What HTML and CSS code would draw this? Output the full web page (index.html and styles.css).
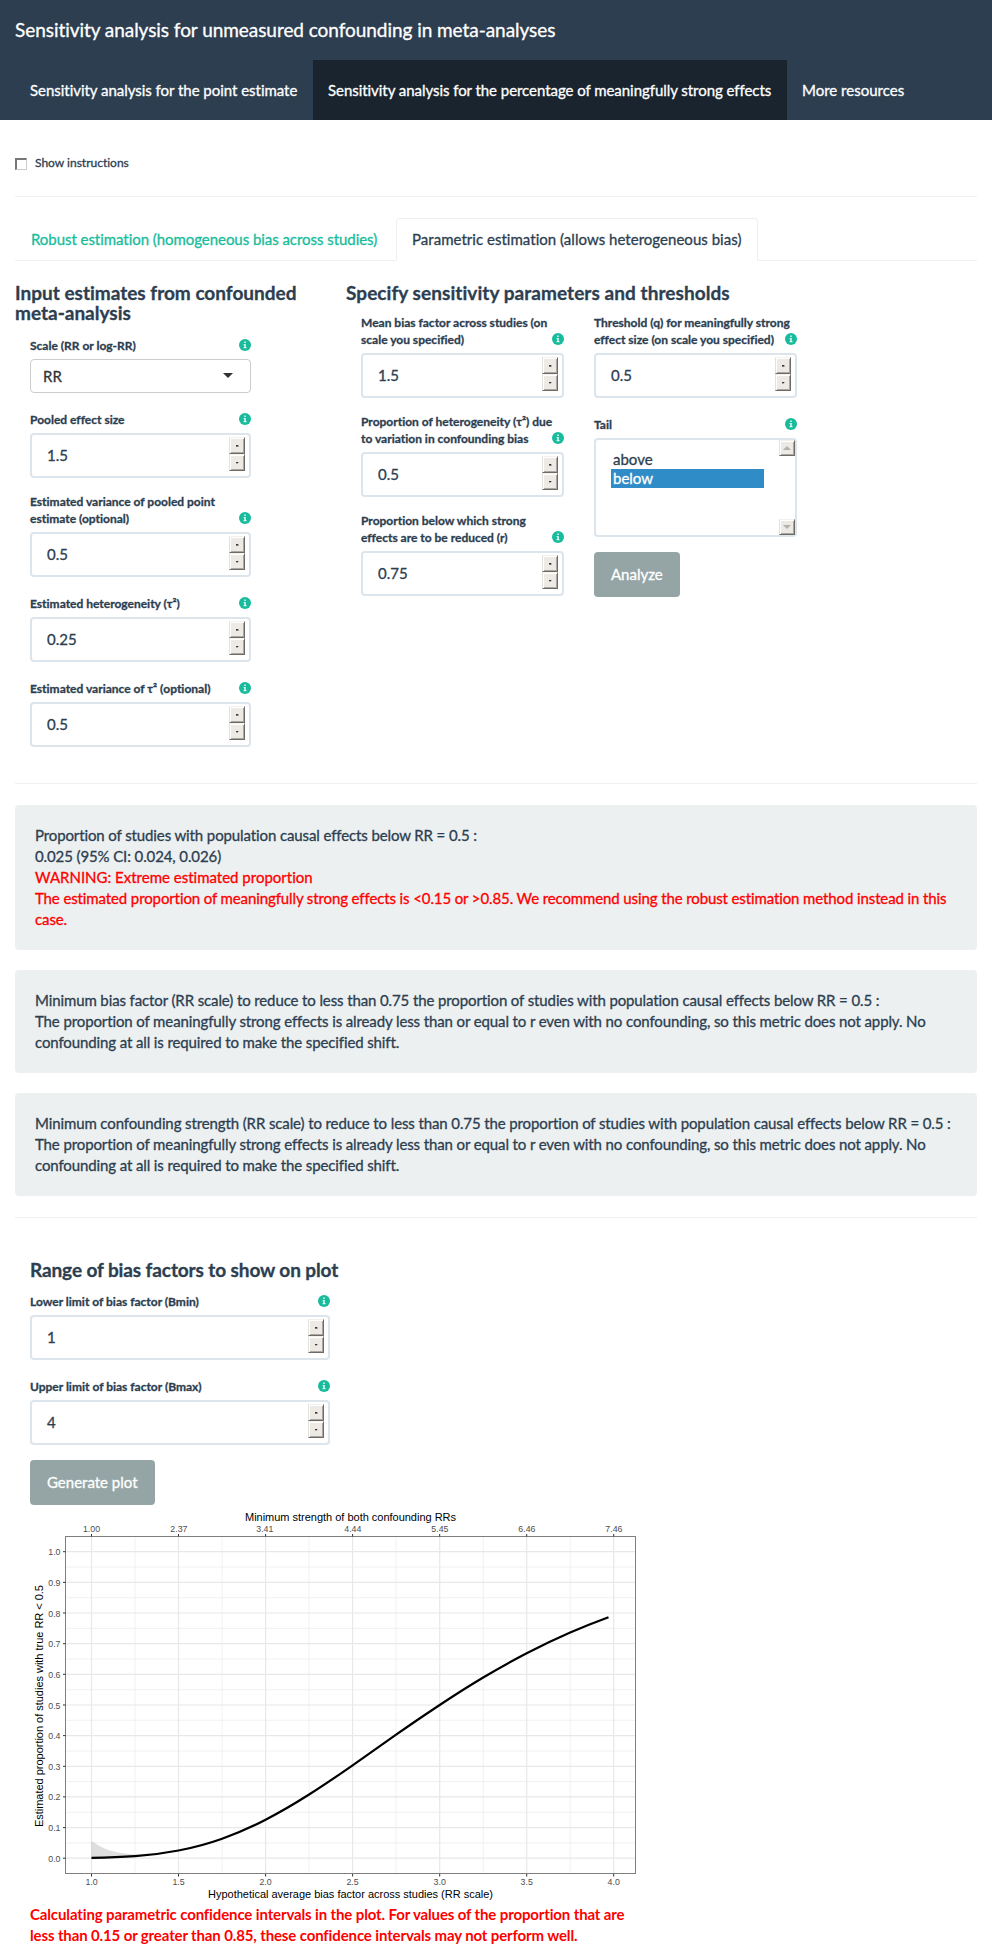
FILE: index.html
```html
<!DOCTYPE html>
<html lang="en">
<head>
<meta charset="utf-8">
<title>Sensitivity analysis for unmeasured confounding in meta-analyses</title>
<link rel="stylesheet" href="styles.css">
</head>
<body>
<svg class="defs" width="0" height="0"><symbol id="info" viewBox="0 0 12 12"><circle cx="6" cy="6" r="6" fill="#18bc9c"/><path d="M5.2 2.4h1.6v1.5H5.2zM4.6 4.9h2.2v3.2h.7v1.2H4.6V8.100h.6V6h-.6z" fill="#fff" fill-opacity=".85"/></symbol></svg>
<header class="navbar">
  <div class="brand">Sensitivity analysis for unmeasured confounding in meta-analyses</div>
  <nav class="nav"><a class="first">Sensitivity analysis for the point estimate</a><a class="active">Sensitivity analysis for the percentage of meaningfully strong effects</a><a class="plain">More resources</a></nav>
</header>
<main class="page">
  <label class="check"><span class="box"></span><span>Show instructions</span></label>
  <hr class="rule">
  <div class="tabs"><a class="tab">Robust estimation (homogeneous bias across studies)</a><a class="tab current">Parametric estimation (allows heterogeneous bias)</a></div>
  <div class="panels">
    <section class="left">
      <h4>Input estimates from confounded meta-analysis</h4>
      <div class="fields">
        <div class="field"><div class="label"><span>Scale (RR or log-RR)</span><svg class="info"><use href="#info"/></svg></div><div class="select"><span>RR</span><i class="caret"></i></div></div>
        <div class="field"><div class="label"><span>Pooled effect size</span><svg class="info"><use href="#info"/></svg></div><div class="number"><span>1.5</span><div class="spin"><b class="up"></b><b class="down"></b></div></div></div>
        <div class="field"><div class="label"><span>Estimated variance of pooled point<br>estimate (optional)</span><svg class="info"><use href="#info"/></svg></div><div class="number"><span>0.5</span><div class="spin"><b class="up"></b><b class="down"></b></div></div></div>
        <div class="field"><div class="label"><span>Estimated heterogeneity (τ²)</span><svg class="info"><use href="#info"/></svg></div><div class="number"><span>0.25</span><div class="spin"><b class="up"></b><b class="down"></b></div></div></div>
        <div class="field"><div class="label"><span>Estimated variance of τ² (optional)</span><svg class="info"><use href="#info"/></svg></div><div class="number"><span>0.5</span><div class="spin"><b class="up"></b><b class="down"></b></div></div></div>
      </div>
    </section>
    <section class="right">
      <h4>Specify sensitivity parameters and thresholds</h4>
      <div class="pair">
        <div class="fields">
          <div class="field"><div class="label"><span>Mean bias factor across studies (on<br>scale you specified)</span><svg class="info"><use href="#info"/></svg></div><div class="number"><span>1.5</span><div class="spin"><b class="up"></b><b class="down"></b></div></div></div>
          <div class="field"><div class="label"><span>Proportion of heterogeneity (τ²) due<br>to variation in confounding bias</span><svg class="info"><use href="#info"/></svg></div><div class="number"><span>0.5</span><div class="spin"><b class="up"></b><b class="down"></b></div></div></div>
          <div class="field"><div class="label"><span>Proportion below which strong<br>effects are to be reduced (r)</span><svg class="info"><use href="#info"/></svg></div><div class="number"><span>0.75</span><div class="spin"><b class="up"></b><b class="down"></b></div></div></div>
        </div>
        <div class="fields">
          <div class="field"><div class="label"><span>Threshold (q) for meaningfully strong<br>effect size (on scale you specified)</span><svg class="info"><use href="#info"/></svg></div><div class="number"><span>0.5</span><div class="spin"><b class="up"></b><b class="down"></b></div></div></div>
          <div class="field"><div class="label"><span>Tail</span><svg class="info"><use href="#info"/></svg></div>
            <div class="list"><div class="options"><div>above</div><div class="chosen">below</div></div><div class="scroll"><b class="up"></b><b class="down"></b></div></div></div>
          <div class="btn">Analyze</div>
        </div>
      </div>
    </section>
  </div>
  <hr class="rule">
  <div class="wells">
    <div class="well">Proportion of studies with population causal effects below RR = 0.5 :<br>0.025 (95% CI: 0.024, 0.026)<br><span class="warn"><span class="plain">WARNING: Extreme estimated proportion</span><br>The estimated proportion of meaningfully strong effects is &lt;0.15 or &gt;0.85. We recommend using the robust estimation method instead in this<br>case.</span></div>
    <div class="well">Minimum bias factor (RR scale) to reduce to less than 0.75 the proportion of studies with population causal effects below RR = 0.5 :<br>The proportion of meaningfully strong effects is already less than or equal to r even with no confounding, so this metric does not apply. No<br>confounding at all is required to make the specified shift.</div>
    <div class="well">Minimum confounding strength (RR scale) to reduce to less than 0.75 the proportion of studies with population causal effects below RR = 0.5 :<br>The proportion of meaningfully strong effects is already less than or equal to r even with no confounding, so this metric does not apply. No<br>confounding at all is required to make the specified shift.</div>
  </div>
  <hr class="rule">
  <section class="plotting">
    <h4>Range of bias factors to show on plot</h4>
    <div class="fields limits">
      <div class="field"><div class="label"><span>Lower limit of bias factor (Bmin)</span><svg class="info"><use href="#info"/></svg></div><div class="number"><span>1</span><div class="spin"><b class="up"></b><b class="down"></b></div></div></div>
      <div class="field"><div class="label"><span>Upper limit of bias factor (Bmax)</span><svg class="info"><use href="#info"/></svg></div><div class="number"><span>4</span><div class="spin"><b class="up"></b><b class="down"></b></div></div></div>
      <div class="btn">Generate plot</div>
    </div>
    <svg class="plot" width="610" height="399" viewBox="0 0 610 399">
      <path class="minor" d="M36 62.1h569M36 92.700h569M36 123.400h569M36 154h569M36 184.700h569M36 215.300h569M36 246h569M36 276.600h569M36 307.300h569M36 337.900h569M105 31.500v337M192.100 31.500v337M279.100 31.500v337M366.100 31.500v337M453.200 31.500v337M540.200 31.500v337"/>
      <path class="major" d="M36 46.700h569M36 77.400h569M36 108h569M36 138.700h569M36 169.300h569M36 200h569M36 230.600h569M36 261.300h569M36 291.900h569M36 322.600h569M36 353.200h569M61.500 31.500v337M148.500 31.500v337M235.600 31.500v337M322.600 31.500v337M409.700 31.500v337M496.700 31.500v337M583.700 31.500v337"/>
      <path d="M61.500 336C73 344 84 349 115 350L105 351.500 61.500 354.500Z" fill="#999" fill-opacity=".32"/>
      <path class="curve" d="M61.500 352.900C76 352.700 90.500 352.300 105 351.200S134 348.300 148.500 345.500S177.600 338.900 192.100 333.700S221.100 322.200 235.600 314.700S264.600 298.700 279.100 289.500S308.100 270.400 322.600 260.300S351.600 239.900 366.100 229.700S395.200 209.600 409.700 200S438.700 181.100 453.200 172.500S482.200 155.800 496.700 148.300S525.700 133.900 540.200 127.600S565.700 117 578.500 112.300"/>
      <rect x="35.500" y="31.500" width="570" height="337" fill="none" stroke="#7f7f7f"/>
      <path class="ticks" d="M33 46.700h2.500M33 77.400h2.500M33 108h2.500M33 138.700h2.500M33 169.300h2.500M33 200h2.500M33 230.600h2.500M33 261.300h2.500M33 291.900h2.500M33 322.600h2.500M33 353.200h2.500M61.500 29v2.500M148.500 29v2.500M235.600 29v2.500M322.600 29v2.500M409.700 29v2.500M496.700 29v2.500M583.700 29v2.500M61.500 369v2.500M148.500 369v2.500M235.600 369v2.500M322.600 369v2.500M409.700 369v2.500M496.700 369v2.500M583.700 369v2.500"/>
      <g class="num" text-anchor="middle"><text x="61.5" y="27">1.00</text><text x="148.9" y="27">2.37</text><text x="234.8" y="27">3.41</text><text x="322.8" y="27">4.44</text><text x="409.9" y="27">5.45</text><text x="496.9" y="27">6.46</text><text x="583.9" y="27">7.46</text>
      <text x="61.500" y="380">1.0</text><text x="148.500" y="380">1.5</text><text x="235.600" y="380">2.0</text><text x="322.600" y="380">2.5</text><text x="409.700" y="380">3.0</text><text x="496.700" y="380">3.5</text><text x="583.700" y="380">4.0</text></g>
      <g class="num" text-anchor="end"><text x="30.500" y="50.2">1.0</text><text x="30.500" y="80.9">0.9</text><text x="30.500" y="111.5">0.8</text><text x="30.500" y="142.2">0.7</text><text x="30.500" y="172.8">0.6</text><text x="30.500" y="203.5">0.5</text><text x="30.500" y="234.1">0.4</text><text x="30.500" y="264.8">0.3</text><text x="30.500" y="295.4">0.2</text><text x="30.500" y="326.100">0.1</text><text x="30.500" y="356.700">0.0</text></g>
      <g class="title"><text x="215" y="16" textLength="211">Minimum strength of both confounding RRs</text><text x="178" y="393" textLength="285">Hypothetical average bias factor across studies (RR scale)</text><text transform="translate(13 322) rotate(-90)" textLength="242">Estimated proportion of studies with true RR &lt; 0.5</text></g>
    </svg>
    <p class="note">Calculating parametric confidence intervals in the plot. For values of the proportion that are<br>less than 0.15 or greater than 0.85, these confidence intervals may not perform well.</p>
  </section>
</main>
</body>
</html>
```
FILE: styles.css
```css
* { box-sizing: border-box; }
body { margin: 0; font: 15px/21px Lato, sans-serif; color: #2c3e50; background: #fff; overflow: hidden; font-variant-ligatures: none; -webkit-text-stroke: .3px; }
.defs { display: block; }
.navbar { height: 120px; background: #2c3e50; color: #fff; letter-spacing: -.05px; }
.brand { height: 60px; padding: 19px 15px 0; font-size: 19px; white-space: nowrap; }
.nav { display: flex; padding-left: 15px; }
.nav a { height: 60px; padding: 19.5px 15px; white-space: nowrap; }
.nav .first { width: 298px; letter-spacing: -.03px; }
.nav .active { width: 474px; background: #1a242f; }
.nav .plain, .plain { letter-spacing: 0; }
.page { padding: 0 15px; }
.check { display: flex; align-items: flex-end; gap: 8px; height: 50px; font-size: 12px; }
.check span:last-child { line-height: 15px; }
.box { width: 12px; height: 12px; border: 1px solid; border-color: #777 #ccc #ccc #777; border-width: 2px 1px 1px 2px; }
.rule { margin: 0; border: 0; border-top: 1px solid #ecf0f1; }
.check + .rule { margin-top: 26px; }
.tabs { display: flex; gap: 2px; margin-top: 21px; height: 43px; border-bottom: 1px solid #ecf0f1; }
.tab { width: 379px; height: 43px; padding: 11px 16px; color: #18bc9c; white-space: nowrap; letter-spacing: -.05px; }
.tabs .current { width: 362px; padding: 10px 15px; color: #2c3e50; border: 1px solid #ecf0f1; border-bottom-color: #fff; border-radius: 4px 4px 0 0; background: #fff; letter-spacing: .03px; }
.panels { display: flex; padding-top: 22px; height: 522px; }
h4 { margin: 0 0 11px; font-size: 19px; font-weight: 700; line-height: 20px; }
.left { width: 331px; }
.left .fields { width: 221px; margin-left: 15px; }
.left h4 { width: 301px; }
.right h4 { letter-spacing: .06px; }
.pair { display: flex; gap: 30px; padding-left: 15px; }
.pair .fields { width: 203px; }
.fields { display: flex; flex-direction: column; align-items: stretch; gap: 15px; }
.label { display: flex; justify-content: space-between; align-items: flex-end; min-height: 25px; padding-bottom: 5px; font-size: 12px; font-weight: 700; line-height: 17px; white-space: nowrap; }
.info { flex: none; width: 12px; height: 12px; margin: 0 0 3px -12px; }
.select { display: flex; justify-content: space-between; align-items: center; height: 34px; padding: 1px 17px 0 12px; border: 1px solid #ccc; border-radius: 4px; color: #333; }
.caret { border: 5px solid transparent; border-top-color: #333; border-bottom: 0; margin-bottom: 3px; }
.number { display: flex; justify-content: space-between; height: 45px; padding: 2px 4px 0 15px; border: 2px solid #dce4ec; border-radius: 4px; line-height: 36px; }
.spin { display: flex; flex-direction: column; width: 16px; height: 34px; }
.spin b, .scroll b { display: flex; align-items: center; justify-content: center; width: 16px; height: 17px; background: #edeae5; border: 1px solid; border-color: #f3f1ee #6e6b66 #6e6b66 #e4e1dc; box-shadow: inset 1px 1px #fff, inset -1px -1px #aaa7a2; }
.spin b::after { content: ""; width: 3px; height: 2px; background: #000; }
.spin .up::after { clip-path: polygon(33% 0, 67% 0, 67% 50%, 100% 50%, 100% 100%, 0 100%, 0 50%, 33% 50%); }
.spin .down::after { clip-path: polygon(0 0, 100% 0, 100% 50%, 67% 50%, 67% 100%, 33% 100%, 33% 50%, 0 50%); }
.list { display: flex; justify-content: space-between; height: 99px; padding-left: 15px; border: 2px solid #dce4ec; border-radius: 4px; }
.options { width: 153px; padding-top: 10px; line-height: 19px; }
.options div { padding-left: 2px; }
.chosen { background: #308cc6; color: #fff; }
.scroll { display: flex; flex-direction: column; justify-content: space-between; }
.scroll b { height: 16px; }
.scroll b::after { content: ""; border: 4px solid transparent; clip-path: none; }
.scroll .up::after { border-bottom-color: #b4b1ac; border-top: 0; }
.scroll .down::after { border-top-color: #b4b1ac; border-bottom: 0; }
.btn { align-self: flex-start; height: 45px; padding: 12px 17px; border-radius: 4px; background: #95a5a6; color: #fff; }
.wells { display: grid; grid-template-columns: minmax(0, 1fr); gap: 20px; padding: 21px 0; }
.well { padding: 20px; border-radius: 4px; background: #ecf0f1; white-space: nowrap; letter-spacing: -.113px; }
.warn, .note { color: #f00; }
.plotting { padding: 42px 15px 0; }
.plotting h4 { margin-bottom: 10px; letter-spacing: -.1px; }
.limits { width: 300px; }
.plot { display: block; -webkit-text-stroke: 0; }
.minor, .major, .ticks, .curve { fill: none; }
.minor { stroke: #ebebeb; stroke-width: .7; }
.major { stroke: #e8e8e8; stroke-width: 1.2; }
.ticks { stroke: #333; stroke-width: 1; }
.curve { stroke: #000; stroke-width: 2.200; }
.num, .title { font-family: "Liberation Sans", Arial, sans-serif; }
.num { font-size: 8.800px; fill: #4d4d4d; }
.title { font-size: 11px; fill: #000; }
.note { margin: 0; font-weight: 700; white-space: nowrap; letter-spacing: -.13px; -webkit-text-stroke: 0; }
```
